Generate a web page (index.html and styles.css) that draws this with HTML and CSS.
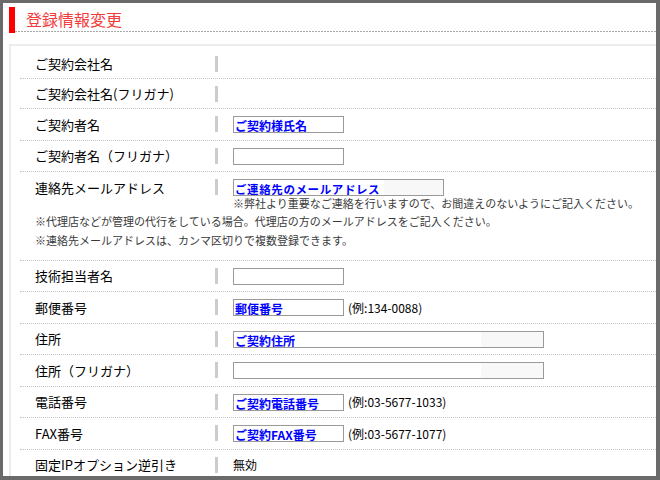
FILE: index.html
```html
<!DOCTYPE html>
<html lang="ja">
<head>
<meta charset="utf-8">
<title>登録情報変更</title>
<link rel="stylesheet" href="styles.css">
</head>
<body>
<div class="frame">
  <h1 class="title"><span class="title-text">登録情報変更</span></h1>
  <div class="box">
    <div class="row">
      <div class="label">ご契約会社名</div><div class="sep"></div><div class="value"></div>
    </div>
    <div class="row">
      <div class="label">ご契約会社名(フリガナ)</div><div class="sep"></div><div class="value"></div>
    </div>
    <div class="row row-input">
      <div class="label">ご契約者名</div><div class="sep"></div>
      <div class="value"><div class="field"><span class="ph">ご契約様氏名</span></div></div>
    </div>
    <div class="row row-input">
      <div class="label">ご契約者名（フリガナ）</div><div class="sep"></div>
      <div class="value"><div class="field"></div></div>
    </div>
    <div class="row row-mail">
      <div class="main">
        <div class="label">連絡先メールアドレス</div><div class="sep"></div>
        <div class="value value-col">
          <div class="field field-mail"><span class="ph ph-spaced">ご連絡先のメールアドレス</span></div>
          <p class="note note-first">※弊社より重要なご連絡を行いますので、お間違えのないようにご記入ください。</p>
        </div>
      </div>
      <div class="notes">
        <p class="note">※代理店などが管理の代行をしている場合。代理店の方のメールアドレスをご記入ください。</p>
        <p class="note">※連絡先メールアドレスは、カンマ区切りで複数登録できます。</p>
      </div>
    </div>
    <div class="row row-input">
      <div class="label">技術担当者名</div><div class="sep"></div>
      <div class="value"><div class="field"></div></div>
    </div>
    <div class="row row-input">
      <div class="label">郵便番号</div><div class="sep"></div>
      <div class="value"><div class="field"><span class="ph">郵便番号</span></div><span class="example">(例:134-0088)</span></div>
    </div>
    <div class="row row-input">
      <div class="label">住所</div><div class="sep"></div>
      <div class="value"><div class="field field-wide"><span class="ph">ご契約住所</span></div></div>
    </div>
    <div class="row row-input">
      <div class="label">住所（フリガナ）</div><div class="sep"></div>
      <div class="value"><div class="field field-wide"></div></div>
    </div>
    <div class="row row-input">
      <div class="label">電話番号</div><div class="sep"></div>
      <div class="value"><div class="field"><span class="ph">ご契約電話番号</span></div><span class="example">(例:03-5677-1033)</span></div>
    </div>
    <div class="row row-input">
      <div class="label">FAX番号</div><div class="sep"></div>
      <div class="value"><div class="field"><span class="ph">ご契約FAX番号</span></div><span class="example">(例:03-5677-1077)</span></div>
    </div>
    <div class="row">
      <div class="label">固定IPオプション逆引き</div><div class="sep"></div>
      <div class="value"><span class="plain">無効</span></div>
    </div>
  </div>
</div>
</body>
</html>
```
FILE: styles.css
```css
html, body {
  margin: 0;
  padding: 0;
  background: #fff;
}

.frame {
  width: 660px;
  height: 480px;
  box-sizing: border-box;
  border: 3px solid #6a6a6a;
  border-right-width: 4px;
  border-bottom-width: 4px;
  padding: 4px 0 0 6px;
  overflow: hidden;
  background: #fff;
  font-family: "Noto Sans CJK JP", "Noto Sans", sans-serif;
  color: #000;
}

.title {
  margin: 0;
  display: flex;
  height: 26px;
  font-weight: normal;
}

.title::before {
  content: "";
  width: 6px;
  background: #ff0000;
  flex: none;
}

.title-text {
  flex: 1;
  height: 25px;
  padding-left: 11px;
  font-size: 16px;
  line-height: 24px;
  color: #f23c3c;
  background-image: repeating-linear-gradient(to right, #a8a8a8 0 2px, transparent 2px 3px);
  background-size: 100% 1px;
  background-repeat: no-repeat;
  background-position: left bottom;
}

.box {
  margin-top: 11px;
  border-top: 2px solid #ececec;
  border-left: 2px solid #ececec;
  padding-top: 3px;
}

.row {
  margin-left: 9px;
  padding: 7px 0 6px 15px;
  border-bottom: 1px dotted #c4c4c4;
  display: flex;
  align-items: center;
  min-height: 16px;
}

.row-input {
  padding-bottom: 6.5px;
  min-height: 17px;
}

.label {
  width: 180px;
  flex: none;
  font-size: 13px;
  line-height: 16px;
  white-space: nowrap;
}

.sep {
  width: 3px;
  height: 16px;
  background: #cccccc;
  flex: none;
  align-self: flex-start;
}

.value {
  margin-left: 15px;
  display: flex;
  align-items: center;
  font-size: 12px;
}

.field {
  width: 111px;
  height: 17px;
  box-sizing: border-box;
  border: 1px solid #9a9a9a;
  background: #fff;
  padding-left: 1px;
  overflow: hidden;
  flex: none;
}

.field-wide {
  width: 311px;
  background: linear-gradient(to right, #fff 0 247px, #f8f8f8 247px);
}

.field-mail {
  width: 211px;
  background: linear-gradient(to right, #fff 0 150px, #f8f8f8 150px);
}

.ph {
  display: inline-block;
  font-size: 12px;
  line-height: 14px;
  font-weight: bold;
  color: #0000ff;
  text-decoration: underline;
  text-underline-offset: 1px;
  white-space: nowrap;
}

.ph-spaced {
  font-size: 11.5px;
  letter-spacing: 0.6px;
  line-height: 13px;
}

.example {
  margin-left: 4px;
  font-size: 12px;
  line-height: 16px;
}

.plain {
  font-size: 12px;
  line-height: 16px;
}

.row-mail {
  display: block;
  padding-bottom: 10px;
}

.main {
  display: flex;
  align-items: flex-start;
}

.main .label {
  line-height: 17px;
}

.value-col {
  flex-direction: column;
  align-items: flex-start;
}

.note {
  margin: 0;
  font-size: 11px;
  line-height: 19px;
  color: #3a3a3a;
  white-space: nowrap;
}

.note-first {
  margin-top: 1px;
  line-height: 13px;
}

.notes {
  margin-top: 1.5px;
}
```
